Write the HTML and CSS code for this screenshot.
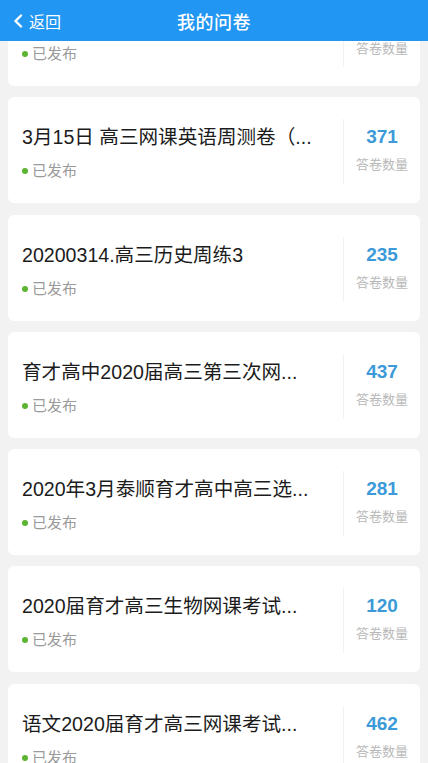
FILE: index.html
```html
<!DOCTYPE html>
<html lang="zh-CN">
<head>
<meta charset="utf-8">
<title>我的问卷</title>
<link rel="stylesheet" href="styles.css">
</head>
<body>
<header class="topbar">
  <div class="back">
    <svg class="chev" width="10" height="14" viewBox="0 0 10 14"><polyline points="8,1.5 2.5,7 8,12.5" fill="none" stroke="#fff" stroke-width="2.4" stroke-linecap="round" stroke-linejoin="round"/></svg>
    <span>返回</span>
  </div>
  <h1 class="title">我的问卷</h1>
</header>
<main class="viewport">
  <ul class="list">
    <li class="card card-cut">
      <div class="info"><p class="status"><i class="dot"></i>已发布</p></div>
      <div class="stat"><span class="lbl">答卷数量</span></div>
    </li>
    <li class="card">
      <div class="info"><p class="name">3月15日 高三网课英语周测卷（...</p><p class="status"><i class="dot"></i>已发布</p></div>
      <div class="stat"><b class="num">371</b><span class="lbl">答卷数量</span></div>
    </li>
    <li class="card">
      <div class="info"><p class="name">20200314.高三历史周练3</p><p class="status"><i class="dot"></i>已发布</p></div>
      <div class="stat"><b class="num">235</b><span class="lbl">答卷数量</span></div>
    </li>
    <li class="card">
      <div class="info"><p class="name">育才高中2020届高三第三次网...</p><p class="status"><i class="dot"></i>已发布</p></div>
      <div class="stat"><b class="num">437</b><span class="lbl">答卷数量</span></div>
    </li>
    <li class="card">
      <div class="info"><p class="name">2020年3月泰顺育才高中高三选...</p><p class="status"><i class="dot"></i>已发布</p></div>
      <div class="stat"><b class="num">281</b><span class="lbl">答卷数量</span></div>
    </li>
    <li class="card">
      <div class="info"><p class="name">2020届育才高三生物网课考试...</p><p class="status"><i class="dot"></i>已发布</p></div>
      <div class="stat"><b class="num">120</b><span class="lbl">答卷数量</span></div>
    </li>
    <li class="card">
      <div class="info"><p class="name">语文2020届育才高三网课考试...</p><p class="status"><i class="dot"></i>已发布</p></div>
      <div class="stat"><b class="num">462</b><span class="lbl">答卷数量</span></div>
    </li>
  </ul>
</main>
</body>
</html>
```
FILE: styles.css
```css
* { box-sizing: border-box; }
html, body { margin: 0; padding: 0; }
body {
  width: 428px;
  height: 763px;
  overflow: hidden;
  background: #f2f2f2;
  font-family: "Liberation Sans", "Noto Sans CJK SC", sans-serif;
  display: flex;
  flex-direction: column;
}
.topbar {
  position: relative;
  flex-shrink: 0;
  height: 41px;
  background: #2196f3;
  display: flex;
  align-items: center;
  justify-content: center;
}
.back {
  position: absolute;
  left: 13px;
  top: 0;
  height: 41px;
  display: flex;
  align-items: center;
  gap: 6px;
  color: #fff;
  font-size: 16px;
}
.title {
  margin: 0;
  color: #fff;
  font-size: 18px;
  font-weight: 500;
  letter-spacing: 0.5px;
}
.viewport {
  flex: 1;
  overflow: hidden;
}
.list {
  list-style: none;
  margin: 0;
  padding: 0 8px;
  display: flex;
  flex-direction: column;
  gap: 11.3px;
}
.card {
  height: 106px;
  background: #fff;
  border-radius: 6px;
  display: flex;
  flex-shrink: 0;
}
.info {
  flex: 1;
  min-width: 0;
  padding: 28px 0 0 14px;
}
.name {
  margin: 0 0 12px;
  font-size: 19.6px;
  line-height: 24px;
  color: #1c1c1c;
  white-space: nowrap;
}
.status {
  margin: 0;
  display: flex;
  align-items: center;
  gap: 4px;
  font-size: 15px;
  line-height: 20px;
  color: #9a9a9a;
}
.dot {
  width: 6px;
  height: 6px;
  border-radius: 50%;
  background: #5cb531;
}
.stat {
  width: 77px;
  margin: 22px 0 19px;
  border-left: 1px solid #f2f2f2;
  display: flex;
  flex-direction: column;
  align-items: center;
  padding-top: 6px;
}
.num {
  font-size: 19px;
  line-height: 24px;
  font-weight: bold;
  color: #3c9ad9;
}
.lbl {
  margin-top: 7px;
  font-size: 13px;
  line-height: 18px;
  color: #b8b8b8;
}
.card-cut {
  height: 45px;
  border-radius: 0 0 6px 6px;
}
.card-cut .info {
  padding-top: 3px;
}
.card-cut .stat {
  margin: 0 0 19px;
  padding-top: 0;
}
.card-cut .lbl {
  margin-top: 0;
  line-height: 16px;
}
```
